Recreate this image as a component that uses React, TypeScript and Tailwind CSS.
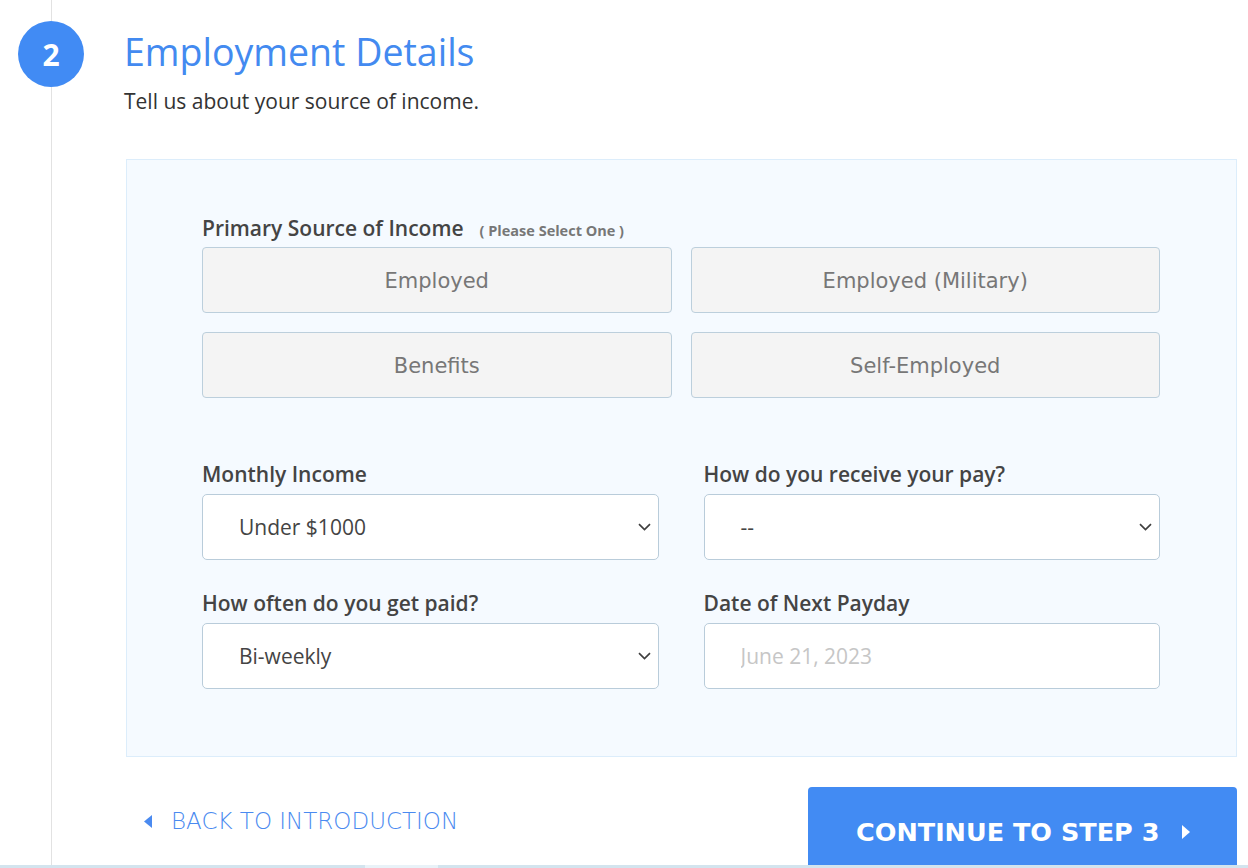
import React from 'react';

const OPEN = { fontFamily: '"Open Sans", "Noto Sans", sans-serif' };
const GEO = { fontFamily: '"DejaVu Sans", "Noto Sans", sans-serif' };

const sources = ['Employed', 'Employed (Military)', 'Benefits', 'Self-Employed'];

const Chevron: React.FC = () => (
  <svg width="13" height="8" viewBox="0 0 13 8" fill="none" className="shrink-0">
    <path d="M1 1.2 L6.5 6.5 L12 1.2" stroke="#3f3f3f" strokeWidth="1.7" />
  </svg>
);

const FakeSelect: React.FC<{ value: string }> = ({ value }) => (
  <div className="flex h-[66px] items-center justify-between rounded-[5px] border border-[#b9ccda] bg-white pl-[36px] pr-[7px]">
    <span className="text-[21px] leading-[28px] text-[#444]">{value}</span>
    <Chevron />
  </div>
);

const Field: React.FC<{ label: string; children: React.ReactNode }> = ({ label, children }) => (
  <div className="flex flex-col gap-[6px]">
    <label className="text-[21px] font-semibold leading-[28px] text-[#444]">{label}</label>
    {children}
  </div>
);

export default function App() {
  return (
    <div className="flex h-[868px] flex-col overflow-hidden bg-white" style={OPEN}>
      <div className="flex flex-1">
        {/* step rail */}
        <div className="flex w-[102px] shrink-0 flex-col items-center">
          <div className="h-[21px] w-px bg-[#e2e2e2]" />
          <div className="flex h-[66px] w-[66px] items-center justify-center rounded-full bg-[#418bf4] text-[30px] font-bold text-white">
            2
          </div>
          <div className="w-px flex-1 bg-[#e2e2e2]" />
        </div>

        <div className="ml-[22px] mr-[11px] flex flex-1 flex-col">
          <h1 className="pt-[29px] text-[37.5px] leading-[46px] text-[#438af0]">Employment Details</h1>
          <p className="mt-[12px] text-[21px] leading-[28px] text-[#333]">Tell us about your source of income.</p>

          <div className="ml-[2px] mt-[44px] border border-[#dcedfb] bg-[#f5faff] pb-[67px] pl-[75px] pr-[76px] pt-[54px]">
            <div className="flex items-baseline">
              <span className="text-[21px] font-semibold leading-[28px] text-[#444]">Primary Source of Income</span>
              <span className="ml-[16px] text-[14.5px] font-bold text-[#777]">( Please Select One )</span>
            </div>
            <div className="mt-[5px] grid grid-cols-2 gap-x-[19px] gap-y-[19px]">
              {sources.map(s => (
                <button
                  key={s}
                  className="flex h-[66px] items-center justify-center rounded-[4px] border border-[#bccfdc] bg-[#f4f4f4] pt-[3px] text-[21px] text-[#777]"
                  style={GEO}
                >
                  {s}
                </button>
              ))}
            </div>

            <div className="mt-[62px] grid grid-cols-2 gap-x-[45px] gap-y-[29px]">
              <Field label="Monthly Income">
                <FakeSelect value="Under $1000" />
              </Field>
              <Field label="How do you receive your pay?">
                <FakeSelect value="--" />
              </Field>
              <Field label="How often do you get paid?">
                <FakeSelect value="Bi-weekly" />
              </Field>
              <Field label="Date of Next Payday">
                <input
                  placeholder="June 21, 2023"
                  className="h-[66px] rounded-[5px] border border-[#b9ccda] bg-white pl-[36px] text-[21px] text-[#444] outline-none placeholder:text-[#c6c6c6]"
                  style={OPEN}
                />
              </Field>
            </div>
          </div>

          <div className="mt-[30px] flex items-start justify-between">
            <a className="ml-[20px] mt-[20px] flex items-center gap-[19px] text-[23px] leading-[28px] text-[#4a8af0]" style={GEO}>
              <svg width="8" height="13" viewBox="0 0 8 13">
                <path d="M8 0 L0 6.5 L8 13 Z" fill="#4a8af0" />
              </svg>
              <span className="font-light">BACK TO INTRODUCTION</span>
            </a>
            <button
              className="flex h-[78px] w-[429px] items-center gap-[23px] rounded-t-[4px] bg-[#428bf3] pl-[48px] pt-[12px] text-[25.5px] font-bold text-white"
              style={GEO}
            >
              <span>CONTINUE TO STEP 3</span>
              <svg width="8" height="14" viewBox="0 0 8 14">
                <path d="M0 0 L8 7 L0 14 Z" fill="#fff" />
              </svg>
            </button>
          </div>
        </div>
      </div>
      <div className="flex h-[3px] shrink-0">
        <div className="w-[365px] bg-[#d3e4ee]" />
        <div className="w-[73px] bg-[#e9f2f8]" />
        <div className="flex-1 bg-[#d3e4ee]" />
      </div>
    </div>
  );
}
